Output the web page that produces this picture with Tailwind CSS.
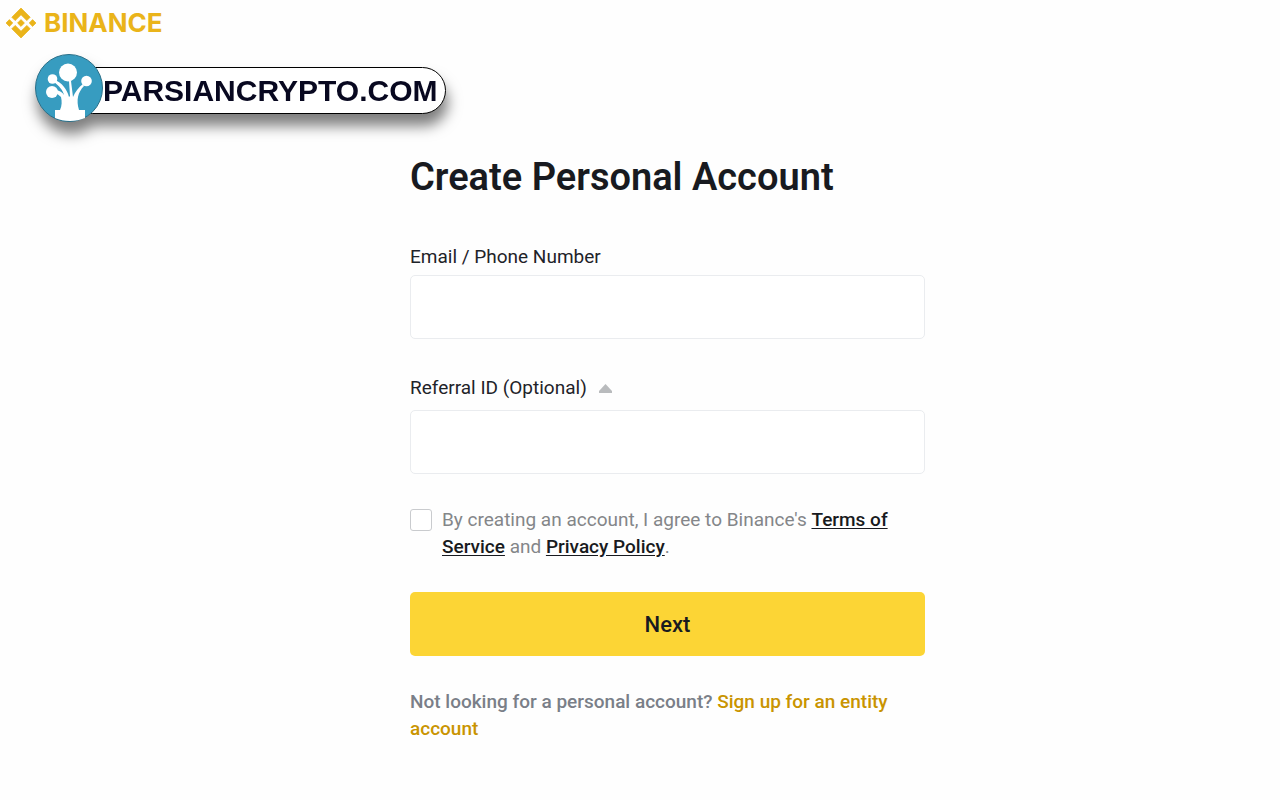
<!DOCTYPE html>
<html lang="en">
<head>
    <meta charset="UTF-8">
    <meta name="viewport" content="width=device-width, initial-scale=1.0">
    <title>Create Personal Account</title>
    <script src="https://cdn.jsdelivr.net/npm/@tailwindcss/browser@4"></script>
</head>
<body class="min-h-screen bg-[#fefefe] text-[#1e2329] font-['Roboto','Noto_Sans',sans-serif]">
    <header class="flex flex-col items-start">
        <a href="#" class="flex items-center gap-2 pl-1.5 pt-2 text-[#eab41a]">
            <svg class="size-[30px]" viewBox="0 0 126.6 126.6" fill="currentColor" stroke="currentColor" stroke-width="3" aria-hidden="true">
                <path d="M38.7 53.2l24.6-24.6 24.6 24.6 14.3-14.3L63.3 0 24.4 38.9zM0 63.3L14.3 49l14.3 14.3-14.3 14.3zM38.7 73.4L63.3 98l24.6-24.6 14.3 14.3-38.9 38.9-38.9-38.9zM98 63.3L112.3 49l14.3 14.3-14.3 14.3zM77.8 63.3L63.3 48.8 48.8 63.3l14.5 14.5z"/>
            </svg>
            <span class="text-[26px] leading-[30px] font-bold font-['Inter',sans-serif]">BINANCE</span>
        </a>

        <a href="#" class="flex items-end ml-[35px] mt-4 drop-shadow-[2px_12px_7px_rgba(0,0,0,0.5)]">
            <svg class="size-[68px] z-10" viewBox="0 0 68 68" aria-hidden="true">
                <circle cx="34" cy="34" r="33.5" fill="#379cc0" stroke="#2b6f88"/>
                <g fill="#fff">
                    <circle cx="33" cy="18.5" r="9"/>
                    <circle cx="17.5" cy="25" r="4.8"/>
                    <circle cx="17" cy="38" r="6"/>
                    <circle cx="51.5" cy="27" r="5.3"/>
                    <path d="M20 64V56h5c2-4 2-9 1-13l-6-5 1-2c4 1 6 2 8 5-1-5-5-9-10-13l1-2c7 3 12 9 14 17l1-1-1-15h2l2 16c2-5 6-10 10-13l1 2c-6 6-8 14-5 24h6v8c-9 4-21 4-30 0z"/>
                </g>
            </svg>
            <span class="h-[47px] -ml-[34px] mb-2 pl-[33px] pr-2 rounded-full border border-black bg-white text-[#080820] text-[30px] leading-[46px] font-bold font-['Liberation_Sans',Arial,sans-serif]">PARSIANCRYPTO.COM</span>
        </a>
    </header>

    <main class="pl-[55px] pt-8">
        <form class="w-full max-w-[515px] mx-auto">
            <h1 class="text-[38px] leading-[46px] font-semibold text-[#181a20]">Create Personal Account</h1>

            <label for="account" class="block mt-[45px] text-[19px] leading-6">Email / Phone Number</label>
            <input id="account" name="account" type="text"
                   class="block w-full h-16 mt-1.5 px-4 text-[19px] bg-white border border-[#eaecef] rounded-[5px] focus:outline-none focus:border-[#fcd535]">

            <label for="referral" class="flex items-center gap-3 mt-[37px] text-[19px] leading-6">
                Referral ID (Optional)
                <svg class="w-[13px] h-[9px]" viewBox="0 0 13 9" fill="#b9bbbd" aria-hidden="true"><path d="M6.5 0L13 7v2H0V7z"/></svg>
            </label>
            <input id="referral" name="referral" type="text"
                   class="block w-full h-16 mt-2.5 px-4 text-[19px] bg-white border border-[#eaecef] rounded-[5px] focus:outline-none focus:border-[#fcd535]">

            <div class="flex items-start gap-2.5 mt-8 text-[19px] leading-[27px]">
                <input id="agree" type="checkbox"
                       class="appearance-none shrink-0 size-[22px] mt-[3px] bg-white border border-[#c9cbce] rounded-[3px] checked:bg-[#fcd535]">
                <label for="agree" class="text-[#848689]">By creating an account, I agree to Binance's
                    <a href="#" class="font-medium text-[#181a20] underline underline-offset-2">Terms of<br>Service</a> and
                    <a href="#" class="font-medium text-[#181a20] underline underline-offset-2">Privacy Policy</a>.</label>
            </div>

            <button type="submit" class="block w-full h-16 mt-8 rounded-[5px] bg-[#fcd535] text-[#181a20] text-[22px] font-medium hover:bg-[#fbda3c]">Next</button>

            <p class="mt-8 text-[19px] leading-[27px] font-medium text-[#7a7f88]">Not looking for a personal account?
                <a href="#" class="text-[#c99400]">Sign up for an entity<br>account</a></p>
        </form>
    </main>
</body>
</html>
